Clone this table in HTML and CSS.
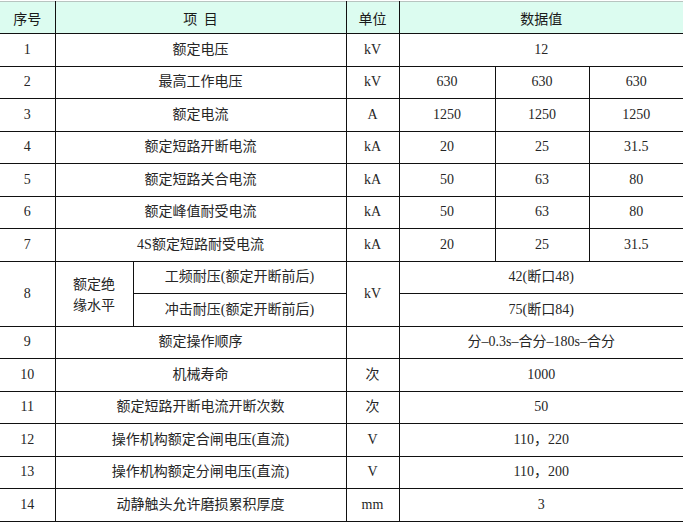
FILE: index.html
```html
<!DOCTYPE html>
<html lang="zh">
<head>
<meta charset="utf-8">
<link rel="stylesheet" href="styles.css">
</head>
<body>
<table class="spec">
  <colgroup>
    <col class="c-no"><col class="c-grp"><col class="c-sub"><col class="c-unit"><col class="c-v1"><col class="c-v2"><col class="c-v3">
  </colgroup>
  <thead>
    <tr class="head">
      <th>序号</th><th colspan="2">项&nbsp;&nbsp;目</th><th>单位</th><th colspan="3">数据值</th>
    </tr>
  </thead>
  <tbody>
    <tr><td>1</td><td colspan="2">额定电压</td><td>kV</td><td colspan="3">12</td></tr>
    <tr><td>2</td><td colspan="2">最高工作电压</td><td>kV</td><td>630</td><td>630</td><td>630</td></tr>
    <tr><td>3</td><td colspan="2">额定电流</td><td>A</td><td>1250</td><td>1250</td><td>1250</td></tr>
    <tr><td>4</td><td colspan="2">额定短路开断电流</td><td>kA</td><td>20</td><td>25</td><td>31.5</td></tr>
    <tr><td>5</td><td colspan="2">额定短路关合电流</td><td>kA</td><td>50</td><td>63</td><td>80</td></tr>
    <tr><td>6</td><td colspan="2">额定峰值耐受电流</td><td>kA</td><td>50</td><td>63</td><td>80</td></tr>
    <tr><td>7</td><td colspan="2">4S额定短路耐受电流</td><td>kA</td><td>20</td><td>25</td><td>31.5</td></tr>
    <tr class="half"><td rowspan="2">8</td><td rowspan="2" class="grp"><span class="ln">额定绝</span><span class="ln">缘水平</span></td><td>工频耐压(额定开断前后)</td><td rowspan="2">kV</td><td colspan="3">42(断口48)</td></tr>
    <tr class="half"><td>冲击耐压(额定开断前后)</td><td colspan="3">75(断口84)</td></tr>
    <tr><td>9</td><td colspan="2">额定操作顺序</td><td></td><td colspan="3">分–0.3s–合分–180s–合分</td></tr>
    <tr><td>10</td><td colspan="2">机械寿命</td><td>次</td><td colspan="3">1000</td></tr>
    <tr><td>11</td><td colspan="2">额定短路开断电流开断次数</td><td>次</td><td colspan="3">50</td></tr>
    <tr><td>12</td><td colspan="2">操作机构额定合闸电压(直流)</td><td>V</td><td colspan="3">110，220</td></tr>
    <tr><td>13</td><td colspan="2">操作机构额定分闸电压(直流)</td><td>V</td><td colspan="3">110，200</td></tr>
    <tr><td>14</td><td colspan="2">动静触头允许磨损累积厚度</td><td>mm</td><td colspan="3">3</td></tr>
  </tbody>
</table>
</body>
</html>
```
FILE: styles.css
```css
html, body {
  margin: 0;
  padding: 0;
  background: #ffffff;
}
.spec {
  border-collapse: collapse;
  table-layout: fixed;
  width: 683px;
  margin-top: 1px;
  font-family: "Liberation Serif", "Noto Sans CJK SC", serif;
  font-size: 14px;
  color: #262626;
}
.c-no { width: 55px; }
.c-grp { width: 78px; }
.c-sub { width: 213px; }
.c-unit { width: 53px; }
.c-v1 { width: 96px; }
.c-v2 { width: 94px; }
.c-v3 { width: 94px; }
.spec th, .spec td {
  border: 1px solid #111;
  padding: 0;
  text-align: center;
  vertical-align: middle;
  height: 31.5px;
  line-height: 16px;
  font-weight: normal;
}
.spec tr > :first-child { border-left: none; }
.spec tr > :last-child { border-right: none; }
.head th {
  background: #dcfcf0;
  font-family: "Noto Sans CJK SC", sans-serif;
  font-size: 14px;
  color: #1a1a1a;
  border-top: 1px solid #b8c4c0;
  height: 31px;
}
.spec td.grp {
  font-family: "Noto Sans CJK SC", sans-serif;
  font-size: 14px;
  line-height: 20.5px;
}
.ln { display: block; }
.spec td[colspan="3"] { border-right: none; }
```
